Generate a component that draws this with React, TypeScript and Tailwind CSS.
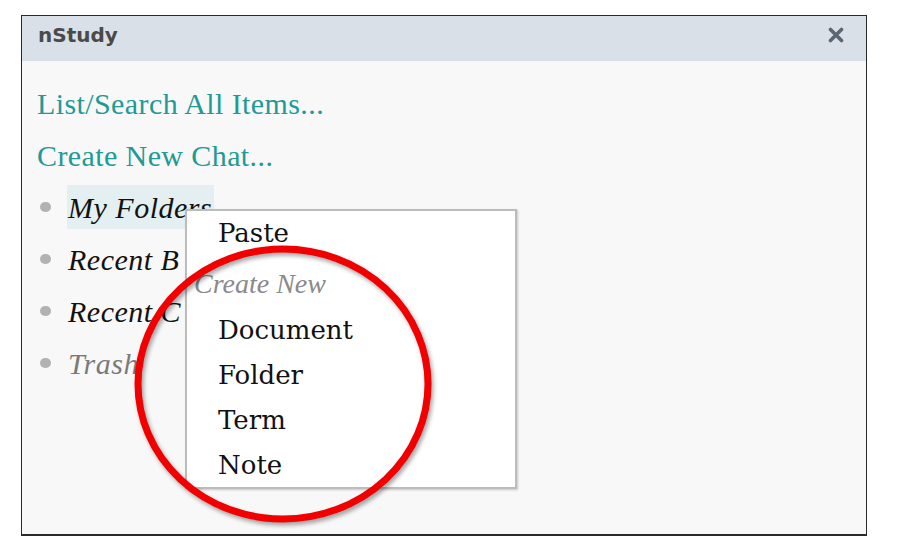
import React from "react";

const LINKS = ["List/Search All Items...", "Create New Chat..."];

const TREE = [
  { label: "My Folders", active: true },
  { label: "Recent B", active: false },
  { label: "Recent C", active: false },
  { label: "Trash", active: false, muted: true },
];

const MENU = ["Document", "Folder", "Term", "Note"];

function CloseIcon() {
  return (
    <svg width="16" height="16" viewBox="0 0 16 16" className="block">
      <path d="M2.5 2.5 L13.5 13.5 M13.5 2.5 L2.5 13.5" stroke="#5b6672" strokeWidth="3.6" strokeLinecap="round" />
    </svg>
  );
}

export default function App() {
  return (
    <div className="w-[900px] h-[559px] bg-white pt-[15px] pl-[21px]">
      <div className="relative w-[846px] h-[521px] border border-b-2 border-[#2a2a2a] bg-[#f8f8f8] overflow-hidden">
        {/* title bar */}
        <div className="h-[45px] bg-[#dae0e8] flex items-center justify-between pl-[16px] pr-[22px] pb-[7px]">
          <span className="text-[20px] font-bold text-[#4a4a4a] leading-none" style={{ fontFamily: '"DejaVu Sans", sans-serif' }}>
            nStudy
          </span>
          <CloseIcon />
        </div>

        {/* body */}
        <div className="pt-[16px] pl-[15px]" style={{ fontFamily: '"Liberation Serif", serif' }}>
          {LINKS.map((l) => (
            <div key={l} className="h-[52px] flex items-center text-[30px] text-[#1f9a97] tracking-[0.4px]">
              {l}
            </div>
          ))}
          {TREE.map((t) => (
            <div key={t.label} className="h-[52px] flex items-center">
              <span className="ml-[3px] mr-[16px] w-[11px] h-[10px] rounded-full bg-[#b2b2b2]" />
              <span
                className={
                  "h-[44px] flex items-center px-[1px] text-[30px] italic tracking-[0.5px] " +
                  (t.active ? "bg-[#e3eff0] text-[#111] pr-[2px]" : t.muted ? "text-[#7a7a7a]" : "text-[#111]")
                }
              >
                {t.label}
              </span>
            </div>
          ))}
        </div>

        {/* context menu */}
        <div className="absolute left-[163px] top-[193px] w-[332px] h-[280px] bg-white border-2 border-[#bcbcbc] shadow-[1px_1px_2px_rgba(0,0,0,0.2)]">
          <div className="h-[45px] flex items-center pl-[31px] text-[26px] text-[#111]" style={{ fontFamily: '"DejaVu Serif", serif' }}>
            Paste
          </div>
          <div className="h-[52px] flex items-center pt-[4px] pl-[7px] text-[28px] italic text-[#8a8a8a]" style={{ fontFamily: '"Liberation Serif", serif' }}>
            Create New
          </div>
          {MENU.map((m) => (
            <div key={m} className="h-[45px] flex items-center pl-[31px] text-[26px] text-[#111]" style={{ fontFamily: '"DejaVu Serif", serif' }}>
              {m}
            </div>
          ))}
        </div>

        {/* red annotation ring */}
        <svg className="absolute inset-0 pointer-events-none drop-shadow-[2px_3px_2px_rgba(0,0,0,0.35)]" width="846" height="521">
          <ellipse cx="261" cy="368" rx="145" ry="135" fill="none" stroke="#f20000" strokeWidth="7" />
        </svg>
      </div>
    </div>
  );
}
